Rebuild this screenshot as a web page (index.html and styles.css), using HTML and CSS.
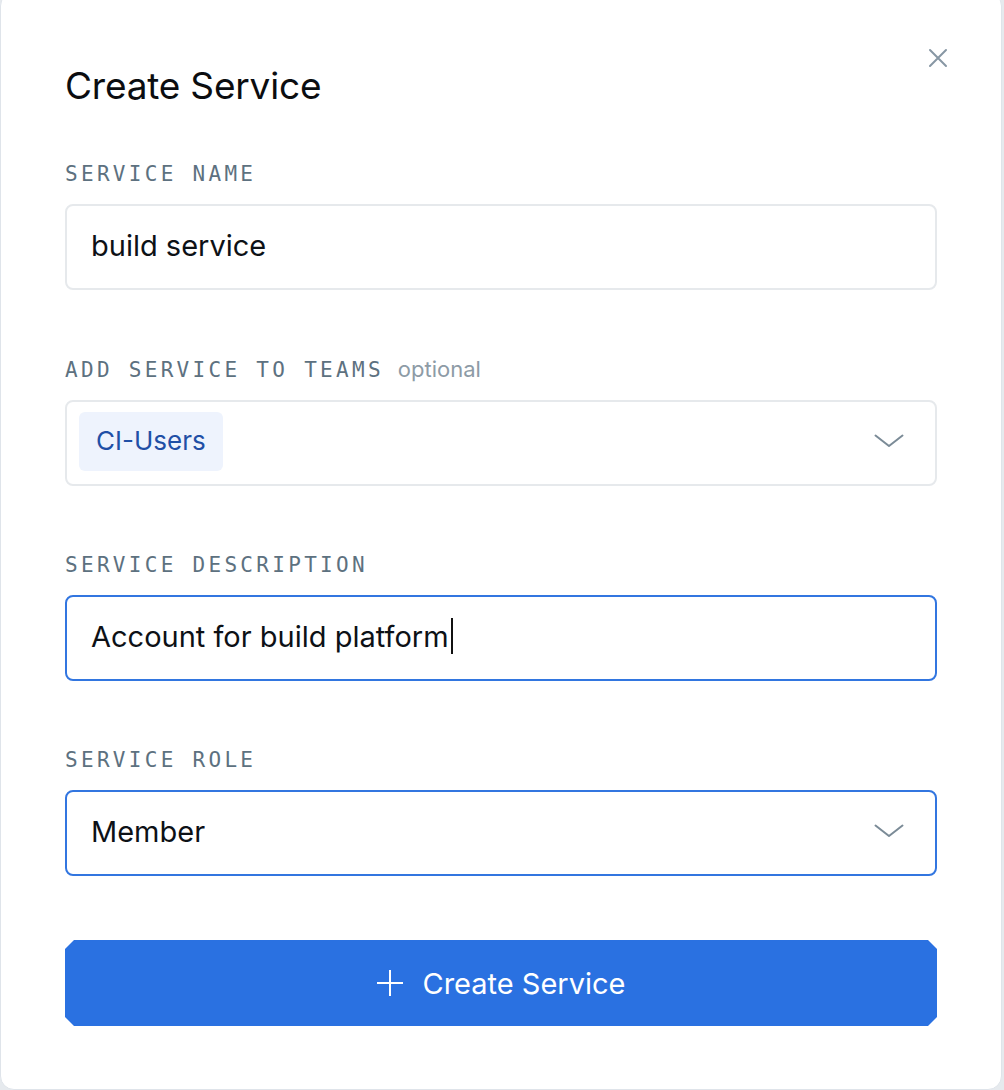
FILE: index.html
```html
<!DOCTYPE html>
<html>
<head>
<meta charset="utf-8">
<link rel="stylesheet" href="styles.css">
</head>
<body>
<div class="modal">
  <button class="close" aria-label="Close">
    <svg width="20" height="20" viewBox="0 0 20 20"><path d="M2 2 L18 18 M18 2 L2 18" stroke="#8797a4" stroke-width="2" fill="none" stroke-linecap="round"/></svg>
  </button>
  <h1 class="title">Create Service</h1>

  <div class="field">
    <div class="label">SERVICE NAME</div>
    <div class="input">build service</div>
  </div>

  <div class="field">
    <div class="label">ADD SERVICE TO TEAMS <span class="optional">optional</span></div>
    <div class="input select multi">
      <span class="chip">CI-Users</span>
      <svg class="chevron" width="30" height="14" viewBox="0 0 30 14"><path d="M1.5 1.5 L15 12 L28.5 1.5" stroke="#7b8b97" stroke-width="2" fill="none" stroke-linecap="round" stroke-linejoin="round"/></svg>
    </div>
  </div>

  <div class="field">
    <div class="label">SERVICE DESCRIPTION</div>
    <div class="input focus">Account for build platform<span class="caret"></span></div>
  </div>

  <div class="field">
    <div class="label">SERVICE ROLE</div>
    <div class="input select focus">
      <span>Member</span>
      <svg class="chevron" width="30" height="14" viewBox="0 0 30 14"><path d="M1.5 1.5 L15 12 L28.5 1.5" stroke="#7b8b97" stroke-width="2" fill="none" stroke-linecap="round" stroke-linejoin="round"/></svg>
    </div>
  </div>

  <button class="submit">
    <svg width="28" height="28" viewBox="0 0 28 28"><path d="M14 1 V27 M1 14 H27" stroke="#fff" stroke-width="2" fill="none"/></svg>
    <span>Create Service</span>
  </button>
</div>
</body>
</html>
```

FILE: styles.css
```css
html, body {
  margin: 0;
  padding: 0;
}
body {
  background: #e6eaee;
  width: 1004px;
  height: 1090px;
  overflow: hidden;
  font-family: Inter, "Noto Sans", sans-serif;
}
.modal {
  position: relative;
  box-sizing: border-box;
  width: 1002px;
  height: 1098px;
  margin-top: -8px;
  background: #fff;
  border: 1px solid #dfe4ea;
  border-radius: 14px;
  padding: 73px 64px 0 64px;
  display: flex;
  flex-direction: column;
}
.close {
  position: absolute;
  top: 55px;
  right: 53px;
  width: 20px;
  height: 20px;
  padding: 0;
  border: 0;
  background: none;
  display: flex;
}
.title {
  margin: 0 0 53px 0;
  font-size: 37px;
  line-height: 40px;
  font-weight: 400;
  color: #0b0d10;
  letter-spacing: -0.2px;
}
.field {
  display: flex;
  flex-direction: column;
  margin-bottom: 64px;
}
.label {
  font-family: "DejaVu Sans Mono", "Liberation Mono", monospace;
  font-size: 21px;
  line-height: 30px;
  letter-spacing: 3.3px;
  color: #5d7180;
  margin-bottom: 15px;
  white-space: nowrap;
}
.optional {
  font-family: Inter, "Noto Sans", sans-serif;
  letter-spacing: 0;
  font-size: 22px;
  color: #8d9ba6;
  margin-left: -2px;
}
.input {
  box-sizing: border-box;
  height: 86px;
  border: 2px solid #e6e9ec;
  border-radius: 8px;
  padding: 0 24px 4px 24px;
  display: flex;
  align-items: center;
  font-size: 29px;
  color: #0d1116;
}
.input.focus {
  border-color: #3276e0;
}
.select {
  justify-content: space-between;
  padding-right: 31px;
}
.multi {
  padding-left: 12px;
}
.chip {
  background: #eef3fd;
  color: #1f4fa6;
  border-radius: 6px;
  height: 59px;
  padding: 0 17px 2px 17px;
  box-sizing: border-box;
  display: flex;
  align-items: center;
  font-size: 26px;
}
.caret {
  display: inline-block;
  width: 2px;
  height: 36px;
  background: #111;
  margin-left: 2px;
}
.submit {
  height: 86px;
  border: 0;
  background: #2a71e1;
  color: #fff;
  font-family: Inter, "Noto Sans", sans-serif;
  font-size: 29px;
  display: flex;
  align-items: center;
  justify-content: center;
  gap: 18px;
  padding: 0;
  clip-path: polygon(9px 0, calc(100% - 9px) 0, 100% 9px, 100% calc(100% - 9px), calc(100% - 9px) 100%, 9px 100%, 0 calc(100% - 9px), 0 9px);
}
```
